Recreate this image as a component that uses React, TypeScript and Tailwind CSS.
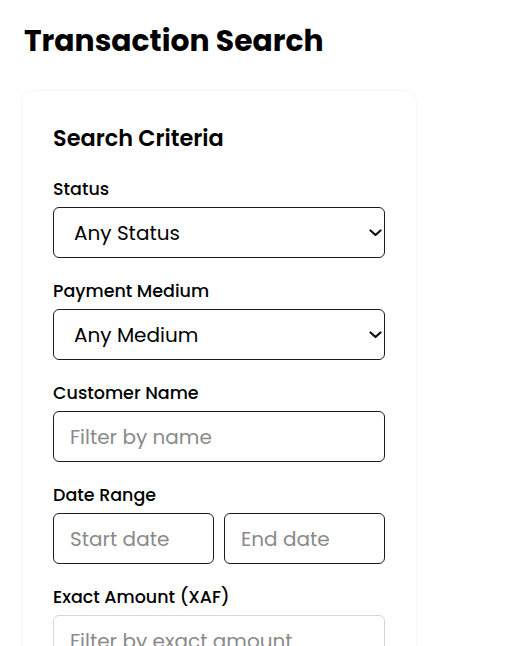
import React from 'react'

const font = { fontFamily: 'Poppins, Inter, "Noto Sans", sans-serif' }

function Chevron() {
  return (
    <svg
      className="pointer-events-none absolute right-[3px] top-1/2 -translate-y-1/2"
      width="13"
      height="8"
      viewBox="0 0 13 8"
      fill="none"
    >
      <path d="M1.5 1.5l5 4.5 5-4.5" stroke="#111" strokeWidth="2.2" strokeLinecap="round" strokeLinejoin="round" />
    </svg>
  )
}

function Field({ label, children, last }: { label: string; children: React.ReactNode; last?: boolean }) {
  return (
    <div className={last ? '' : 'mb-[21px]'}>
      <label className="mb-1.5 block text-[17.5px] font-medium leading-6 text-black">{label}</label>
      {children}
    </div>
  )
}

function Select({ value }: { value: string }) {
  return (
    <div className="relative">
      <select
        defaultValue={value}
        className="h-[51px] w-full appearance-none rounded-md border border-[#1c1c1c] bg-white pl-5 pr-6 text-[20px] text-black outline-none"
      >
        <option>{value}</option>
      </select>
      <Chevron />
    </div>
  )
}

function TextInput({ placeholder, muted }: { placeholder: string; muted?: boolean }) {
  return (
    <input
      placeholder={placeholder}
      className={`h-[51px] w-full min-w-0 rounded-md border bg-white px-4 text-[20px] text-black outline-none placeholder:text-[#8a8a8a] ${
        muted ? 'border-[#d4d6dc]' : 'border-[#1c1c1c]'
      }`}
    />
  )
}

export default function App() {
  return (
    <div className="min-h-screen bg-white px-[22px] pt-[23px]" style={font}>
      <h1 className="ml-[2px] text-[29.8px] font-bold leading-9 text-black">Transaction Search</h1>

      <div className="mt-8 w-[394px] rounded-[10px] bg-white px-[31px] pb-8 pt-8 shadow-[0_0_3px_rgba(0,0,0,0.08)]">
        <h2 className="mb-6 text-[22.4px] font-semibold leading-[30px] text-black">Search Criteria</h2>

        <Field label="Status">
          <Select value="Any Status" />
        </Field>

        <Field label="Payment Medium">
          <Select value="Any Medium" />
        </Field>

        <Field label="Customer Name">
          <TextInput placeholder="Filter by name" />
        </Field>

        <Field label="Date Range">
          <div className="grid grid-cols-2 gap-[10px]">
            <TextInput placeholder="Start date" />
            <TextInput placeholder="End date" />
          </div>
        </Field>

        <Field label="Exact Amount (XAF)" last>
          <TextInput placeholder="Filter by exact amount" muted />
        </Field>
      </div>
    </div>
  )
}
